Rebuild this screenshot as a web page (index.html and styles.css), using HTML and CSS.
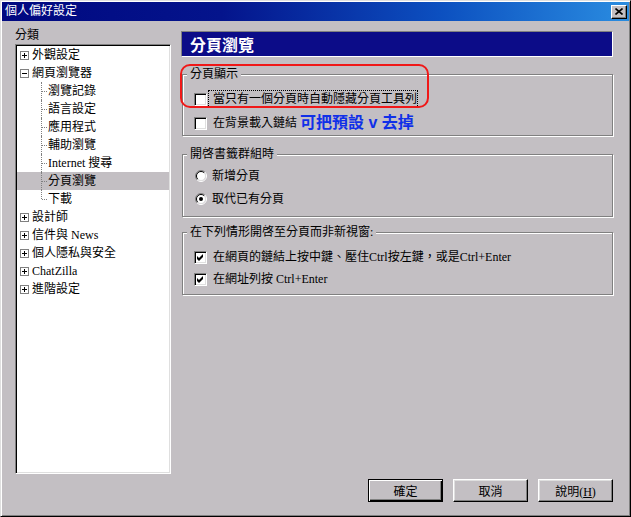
FILE: index.html
```html
<!DOCTYPE html>
<html>
<head>
  <title>個人偏好設定</title>
  <link rel="stylesheet" href="styles.css">
</head>
<body>
  <div class="window">
    <div class="titlebar">
      <span class="title">個人偏好設定</span>
      <span class="close-btn">
        <svg width="8" height="7" viewBox="0 0 8 7"><path d="M0.5 0.5L7.5 6.5M7.5 0.5L0.5 6.5" stroke="#000" stroke-width="1.6"/></svg>
      </span>
    </div>

    <div class="main">
      <div class="sidebar">
        <div class="side-label">分類</div>
        <ul class="tree">
          <li class="node"><svg class="expander" width="9" height="9"><rect x="0.5" y="0.5" width="8" height="8" fill="#fff" stroke="#808080"/><path d="M2 4.5h5M4.5 2v5" stroke="#000"/></svg>外觀設定</li>
          <li class="node"><svg class="expander" width="9" height="9"><rect x="0.5" y="0.5" width="8" height="8" fill="#fff" stroke="#808080"/><path d="M2 4.5h5" stroke="#000"/></svg>網頁瀏覽器</li>
          <li class="child">瀏覽記錄</li>
          <li class="child">語言設定</li>
          <li class="child">應用程式</li>
          <li class="child">輔助瀏覽</li>
          <li class="child">Internet 搜尋</li>
          <li class="child selected">分頁瀏覽</li>
          <li class="child last">下載</li>
          <li class="node"><svg class="expander" width="9" height="9"><rect x="0.5" y="0.5" width="8" height="8" fill="#fff" stroke="#808080"/><path d="M2 4.5h5M4.5 2v5" stroke="#000"/></svg>設計師</li>
          <li class="node"><svg class="expander" width="9" height="9"><rect x="0.5" y="0.5" width="8" height="8" fill="#fff" stroke="#808080"/><path d="M2 4.5h5M4.5 2v5" stroke="#000"/></svg>信件與 News</li>
          <li class="node"><svg class="expander" width="9" height="9"><rect x="0.5" y="0.5" width="8" height="8" fill="#fff" stroke="#808080"/><path d="M2 4.5h5M4.5 2v5" stroke="#000"/></svg>個人隱私與安全</li>
          <li class="node"><svg class="expander" width="9" height="9"><rect x="0.5" y="0.5" width="8" height="8" fill="#fff" stroke="#808080"/><path d="M2 4.5h5M4.5 2v5" stroke="#000"/></svg>ChatZilla</li>
          <li class="node"><svg class="expander" width="9" height="9"><rect x="0.5" y="0.5" width="8" height="8" fill="#fff" stroke="#808080"/><path d="M2 4.5h5M4.5 2v5" stroke="#000"/></svg>進階設定</li>
        </ul>
      </div>

      <div class="content">
        <div class="page-title">分頁瀏覽</div>

        <fieldset class="group group-tabs">
          <legend>分頁顯示</legend>
          <div class="option">
            <span class="checkbox"></span>
            <span class="option-text focused">當只有一個分頁時自動隱藏分頁工具列</span>
          </div>
          <div class="option">
            <span class="checkbox"></span>
            <span class="option-text">在背景載入鏈結</span>
            <span class="note">可把預設 v 去掉</span>
          </div>
        </fieldset>

        <fieldset class="group group-bookmarks">
          <legend>開啓書籤群組時</legend>
          <div class="option">
            <svg class="radio" width="12" height="12" viewBox="0 0 12 12">
              <circle cx="6" cy="6" r="4.5" fill="#fff"/>
              <path d="M2.1 9.9A5.5 5.5 0 0 1 9.9 2.1" fill="none" stroke="#808080"/>
              <path d="M2.8 9.2A4.5 4.5 0 0 1 9.2 2.8" fill="none" stroke="#000"/>
              <path d="M9.9 2.1A5.5 5.5 0 0 1 2.1 9.9" fill="none" stroke="#fff"/>
              <path d="M9.2 2.8A4.5 4.5 0 0 1 2.8 9.2" fill="none" stroke="#dfdfdf"/>
            </svg>
            <span class="option-text">新增分頁</span>
          </div>
          <div class="option">
            <svg class="radio" width="12" height="12" viewBox="0 0 12 12">
              <circle cx="6" cy="6" r="4.5" fill="#fff"/>
              <path d="M2.1 9.9A5.5 5.5 0 0 1 9.9 2.1" fill="none" stroke="#808080"/>
              <path d="M2.8 9.2A4.5 4.5 0 0 1 9.2 2.8" fill="none" stroke="#000"/>
              <path d="M9.9 2.1A5.5 5.5 0 0 1 2.1 9.9" fill="none" stroke="#fff"/>
              <path d="M9.2 2.8A4.5 4.5 0 0 1 2.8 9.2" fill="none" stroke="#dfdfdf"/>
              <circle cx="6" cy="6" r="2" fill="#000"/>
            </svg>
            <span class="option-text">取代已有分頁</span>
          </div>
        </fieldset>

        <fieldset class="group group-links">
          <legend>在下列情形開啓至分頁而非新視窗:</legend>
          <div class="option">
            <span class="checkbox"><svg width="7" height="7" viewBox="0 0 7 7"><path d="M0 2L2 4L6 0V3L2 7L0 5Z" fill="#000"/></svg></span>
            <span class="option-text">在網頁的鏈結上按中鍵、壓住Ctrl按左鍵，或是Ctrl+Enter</span>
          </div>
          <div class="option">
            <span class="checkbox"><svg width="7" height="7" viewBox="0 0 7 7"><path d="M0 2L2 4L6 0V3L2 7L0 5Z" fill="#000"/></svg></span>
            <span class="option-text">在網址列按 Ctrl+Enter</span>
          </div>
        </fieldset>

        <div class="note-ring"></div>
      </div>
    </div>

    <div class="footer">
      <button class="button default">確定</button>
      <button class="button">取消</button>
      <button class="button">說明(<u>H</u>)</button>
    </div>
  </div>
</body>
</html>
```

FILE: styles.css
```css
body {
  margin: 0;
  padding: 0;
  font-family: "Liberation Serif", "Noto Sans CJK TC", serif;
  font-size: 12px;
  color: #000;
}

.window {
  width: 631px;
  height: 517px;
  box-sizing: border-box;
  padding: 1px;
  border: 1px solid;
  border-color: #dfdfdf #000 #000 #dfdfdf;
  box-shadow: inset 1px 1px #fff, inset -1px -1px #808080;
  background-color: #c3bfc3;
  display: flex;
  flex-direction: column;
}

.titlebar {
  height: 19px;
  padding: 0 2px 0 3px;
  display: flex;
  align-items: center;
  justify-content: space-between;
  background: linear-gradient(to right, #000880 0%, #04148c 35%, #0c50c0 70%, #2a8ce0 100%);
  color: #fff;
}

.title {
  line-height: 19px;
}

.close-btn {
  width: 16px;
  height: 14px;
  box-sizing: border-box;
  display: flex;
  align-items: center;
  justify-content: center;
  background-color: #c3bfc3;
  border: 1px solid;
  border-color: #fff #000 #000 #fff;
  box-shadow: inset -1px -1px #808080;
}

.main {
  display: flex;
  gap: 10px;
  padding: 6px 16px 0 13px;
}

.sidebar {
  width: 156px;
  flex-shrink: 0;
}

.side-label {
  line-height: 17px;
}

.tree {
  height: 430px;
  box-sizing: border-box;
  margin: 0;
  padding: 0;
  list-style: none;
  background-color: #fff;
  border: 1px solid;
  border-color: #808080 #fff #fff #808080;
  box-shadow: inset 1px 1px #000, inset -1px -1px #dfdfdf;
  padding: 1px;
}

.tree li {
  height: 18px;
  line-height: 18px;
  display: flex;
  align-items: center;
  white-space: nowrap;
}

.node {
  padding-left: 3px;
}

.expander {
  margin-right: 3px;
  flex-shrink: 0;
}

.child {
  position: relative;
  padding-left: 31px;
}

/* dotted tree connectors */
.child::before {
  content: "";
  position: absolute;
  left: 24px;
  top: 0;
  bottom: 0;
  border-left: 1px dotted #808080;
}

.child::after {
  content: "";
  position: absolute;
  left: 25px;
  top: 9px;
  width: 5px;
  border-top: 1px dotted #808080;
}

.child.last::before {
  bottom: 9px;
}

.selected {
  background-color: #c3bfc3;
}

.content {
  flex: 1;
  position: relative;
  margin-top: 4px;
}

.page-title {
  height: 26px;
  box-sizing: border-box;
  padding-left: 8px;
  border: 1px solid;
  border-color: #808080 #fff #fff #808080;
  background-color: #0c0c88;
  color: #fff;
  font-family: "Noto Sans CJK TC", sans-serif;
  font-size: 16px;
  font-weight: bold;
  line-height: 24px;
}

.group {
  width: 431px;
  min-width: 0;
  box-sizing: border-box;
  margin: 0 0 0 1px;
  padding: 0 11px;
  border: 1px solid #808080;
  box-shadow: inset 1px 1px #fff, 1px 1px #fff;
  display: flex;
  flex-direction: column;
}

.group legend {
  margin-left: -7px;
  padding: 0 3px;
  line-height: 14px;
  background-color: #c3bfc3;
}

.group-tabs {
  margin-top: 10px;
  padding-top: 9px;
  padding-bottom: 3px;
  gap: 6px;
}

.group-bookmarks {
  margin-top: 11px;
  padding-top: 6px;
  padding-bottom: 8px;
  gap: 5px;
}

.group-links {
  margin-top: 8px;
  padding-top: 9px;
  padding-bottom: 6px;
  gap: 4px;
}

.option {
  height: 18px;
  display: flex;
  align-items: center;
  white-space: nowrap;
}

.checkbox {
  width: 13px;
  height: 13px;
  box-sizing: border-box;
  flex-shrink: 0;
  display: flex;
  align-items: center;
  justify-content: center;
  background-color: #fff;
  border: 1px solid;
  border-color: #808080 #fff #fff #808080;
  box-shadow: inset 1px 1px #000, inset -1px -1px #dfdfdf;
}

.radio {
  flex-shrink: 0;
  margin-left: 1px;
}

.option-text {
  margin-left: 6px;
  line-height: 16px;
}

.radio + .option-text {
  margin-left: 5px;
}

.option-text.focused {
  margin-left: 1px;
  padding: 0 0 0 4px;
  border: 1px dotted #000;
}

.note {
  margin-left: 3px;
  color: #1030e8;
  font-family: "Liberation Sans", "Noto Sans CJK TC", sans-serif;
  font-size: 16px;
  font-weight: bold;
  line-height: 18px;
}

.note-ring {
  position: absolute;
  left: -1px;
  top: 33px;
  width: 249px;
  height: 44px;
  box-sizing: border-box;
  border: 2px solid #f01818;
  border-radius: 10px;
}

.footer {
  display: flex;
  justify-content: flex-end;
  gap: 10px;
  padding: 5px 16px 0 0;
}

.button {
  width: 75px;
  height: 23px;
  box-sizing: border-box;
  padding: 0;
  font-family: "Liberation Serif", "Noto Sans CJK TC", serif;
  font-size: 12px;
  color: #000;
  background-color: #c3bfc3;
  border: 1px solid;
  border-color: #fff #000 #000 #fff;
  box-shadow: inset -1px -1px #808080, inset 1px 1px #dfdfdf;
  border-radius: 0;
}

.button.default {
  border-color: #000;
  box-shadow: inset 1px 1px #fff, inset -1px -1px #000, inset -2px -2px #808080;
}
```
